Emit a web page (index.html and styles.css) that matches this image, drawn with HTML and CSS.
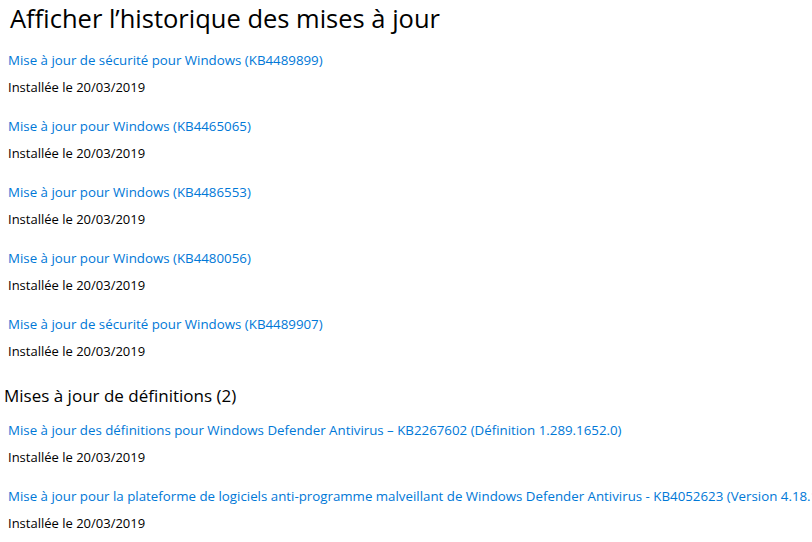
FILE: index.html
```html
<!DOCTYPE html>
<html>
  <head>
    <title>Historique des mises à jour</title>
    <meta name="viewport" content="width=device-width, initial-scale=1.0" />
    <link rel="stylesheet" href="styles.css">
  </head>
  <body>
    <div class="page">
      <h1>Afficher l’historique des mises à jour</h1>

      <div class="update-list">
        <div class="update">
          <a href="#">Mise à jour de sécurité pour Windows (KB4489899)</a>
          <p>Installée le 20/03/2019</p>
        </div>
        <div class="update">
          <a href="#">Mise à jour pour Windows (KB4465065)</a>
          <p>Installée le 20/03/2019</p>
        </div>
        <div class="update">
          <a href="#">Mise à jour pour Windows (KB4486553)</a>
          <p>Installée le 20/03/2019</p>
        </div>
        <div class="update">
          <a href="#">Mise à jour pour Windows (KB4480056)</a>
          <p>Installée le 20/03/2019</p>
        </div>
        <div class="update">
          <a href="#">Mise à jour de sécurité pour Windows (KB4489907)</a>
          <p>Installée le 20/03/2019</p>
        </div>
      </div>

      <h2>Mises à jour de définitions (2)</h2>

      <div class="update-list defs">
        <div class="update">
          <a href="#">Mise à jour des définitions pour Windows Defender Antivirus – KB2267602 (Définition 1.289.1652.0)</a>
          <p>Installée le 20/03/2019</p>
        </div>
        <div class="update">
          <a href="#">Mise à jour pour la plateforme de logiciels anti-programme malveillant de Windows Defender Antivirus - KB4052623 (Version 4.18.1902.5)</a>
          <p>Installée le 20/03/2019</p>
        </div>
      </div>
    </div>
  </body>
</html>
```

FILE: styles.css
```css
html,
body {
  margin: 0;
  padding: 0;
  background: #fff;
  overflow: hidden;
}
body {
  font-family: "Segoe UI", "Open Sans", Arial, sans-serif;
  color: #000;
}
.page {
  padding: 0 0 0 8px;
}
h1 {
  margin: 0 0 0 2px;
  font-size: 25.5px;
  font-weight: 400;
  line-height: 36px;
  white-space: nowrap;
}
h2 {
  margin: 1px 0 0 -4px;
  font-size: 17px;
  font-weight: 400;
  line-height: 24px;
  white-space: nowrap;
}
.update-list {
  display: flex;
  flex-direction: column;
  gap: 19px;
  padding-top: 14px;
  padding-bottom: 22px;
}
.update-list.defs {
  padding-top: 12px;
}
.update {
  display: flex;
  flex-direction: column;
  gap: 7px;
}
.update a {
  color: #0078d7;
  text-decoration: none;
  font-size: 13.3px;
  line-height: 20px;
  white-space: nowrap;
}
.update p {
  margin: 0;
  font-size: 13px;
  line-height: 20px;
  white-space: nowrap;
}
```
